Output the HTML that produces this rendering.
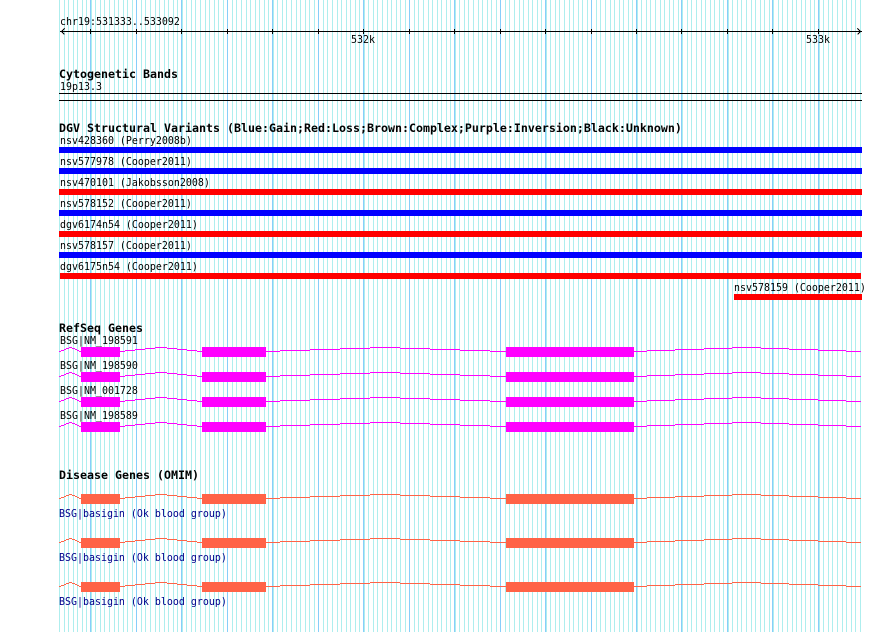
<!DOCTYPE html>
<html><head><meta charset="utf-8"><title>GBrowse BSG</title>
<style>
html,body{margin:0;padding:0;background:#fff;width:890px;height:632px;overflow:hidden}
svg{position:absolute;left:0;top:0}
text{font-family:"DejaVu Sans Mono","Liberation Mono",monospace;font-size:11px;white-space:pre}
.b{font-weight:bold;font-size:11.63px}
</style></head><body>
<svg width="890" height="632" viewBox="0 0 890 632" xmlns="http://www.w3.org/2000/svg">
<defs>
<path id="m" d="M59.5 0V632M64.5 0V632M68.5 0V632M73.5 0V632M77.5 0V632M82.5 0V632M86.5 0V632M91.5 0V632M95.5 0V632M100.5 0V632M104.5 0V632M109.5 0V632M114.5 0V632M118.5 0V632M123.5 0V632M127.5 0V632M132.5 0V632M136.5 0V632M141.5 0V632M145.5 0V632"/>
<g id="gene" shape-rendering="crispEdges">
<path fill="none" stroke="currentColor" stroke-width="1" d="M59 4.5H61M61 3.5H64M64 2.5H66M66 1.5H69M69 .5H72M72 1.5H75M75 2.5H77M77 3.5H79M79 4.5H81M120 4.5H125M125 3.5H135M135 2.5H145M145 1.5H155M155 .5H167M167 1.5H177M177 2.5H187M187 3.5H197M197 4.5H202M266 4.5H280M280 3.5H310M310 2.5H340M340 1.5H370M370 .5H400M400 1.5H430M430 2.5H460M460 3.5H490M490 4.5H506M634 4.5H647M647 3.5H675M675 2.5H704M704 1.5H732M732 .5H761M761 1.5H789M789 2.5H818M818 3.5H846M846 4.5H861"/>
<path fill="currentColor" d="M81 0H120V10H81ZM202 0H266V10H202ZM506 0H634V10H506Z"/>
</g>
</defs>
<g shape-rendering="crispEdges" fill="none" stroke="#aeeeee" stroke-width="1">
<use href="#m" x="0"/><use href="#m" x="91"/><use href="#m" x="182"/><use href="#m" x="273"/><use href="#m" x="364"/><use href="#m" x="455"/><use href="#m" x="546"/><use href="#m" x="637"/>
<path d="M787.5 0V632M792.5 0V632M796.5 0V632M801.5 0V632M805.5 0V632M810.5 0V632M814.5 0V632M819.5 0V632M823.5 0V632M828.5 0V632M832.5 0V632M837.5 0V632M842.5 0V632M846.5 0V632M851.5 0V632M855.5 0V632M860.5 0V632"/>
</g>
<path shape-rendering="crispEdges" fill="none" stroke="#87cefa" stroke-width="1" d="M90.5 0V632M136.5 0V632M181.5 0V632M227.5 0V632M272.5 0V632M318.5 0V632M363.5 0V632M409.5 0V632M454.5 0V632M500.5 0V632M545.5 0V632M591.5 0V632M636.5 0V632M681.5 0V632M727.5 0V632M772.5 0V632M818.5 0V632"/>
<g shape-rendering="crispEdges" fill="none" stroke="#000" stroke-width="1">
<path d="M60 31.5H862M59 93.5H862M59 100.5H862"/>
<path d="M90.5 29V34M136.5 29V34M181.5 29V34M227.5 29V34M272.5 29V34M318.5 29V34M363.5 29V34M409.5 29V34M454.5 29V34M500.5 29V34M545.5 29V34M591.5 29V34M636.5 29V34M681.5 29V34M727.5 29V34M772.5 29V34M818.5 29V34"/>
<path d="M64.5 28.5L61.5 31.5L64.5 34.5M857.5 28.5L860.5 31.5L857.5 34.5"/>
</g>
<g shape-rendering="crispEdges">
<rect x="59" y="147" width="803" height="6" fill="#00f"/>
<rect x="59" y="168" width="803" height="6" fill="#00f"/>
<rect x="59" y="189" width="803" height="6" fill="#f00"/>
<rect x="59" y="210" width="803" height="6" fill="#00f"/>
<rect x="59" y="231" width="803" height="6" fill="#f00"/>
<rect x="59" y="252" width="803" height="6" fill="#00f"/>
<rect x="60" y="273" width="801" height="6" fill="#f00"/>
<rect x="734" y="294" width="128" height="6" fill="#f00"/>
</g>
<use href="#gene" y="347" color="#ff00ff"/>
<use href="#gene" y="372" color="#ff00ff"/>
<use href="#gene" y="397" color="#ff00ff"/>
<use href="#gene" y="422" color="#ff00ff"/>
<use href="#gene" y="494" color="#ff6347"/>
<use href="#gene" y="538" color="#ff6347"/>
<use href="#gene" y="582" color="#ff6347"/>
<g>
<text transform="translate(60,25) scale(.906,1)">chr19:531333..533092</text>
<text transform="translate(351,43) scale(.906,1)">532k</text>
<text transform="translate(806,43) scale(.906,1)">533k</text>
<text class="b" transform="translate(59,78)">Cytogenetic Bands</text>
<text transform="translate(60,90) scale(.906,1)">19p13.3</text>
<text class="b" transform="translate(59,132)">DGV Structural Variants (Blue:Gain;Red:Loss;Brown:Complex;Purple:Inversion;Black:Unknown)</text>
<text transform="translate(60,144) scale(.906,1)">nsv428360 (Perry2008b)</text>
<text transform="translate(60,165) scale(.906,1)">nsv577978 (Cooper2011)</text>
<text transform="translate(60,186) scale(.906,1)">nsv470101 (Jakobsson2008)</text>
<text transform="translate(60,207) scale(.906,1)">nsv578152 (Cooper2011)</text>
<text transform="translate(60,228) scale(.906,1)">dgv6174n54 (Cooper2011)</text>
<text transform="translate(60,249) scale(.906,1)">nsv578157 (Cooper2011)</text>
<text transform="translate(60,270) scale(.906,1)">dgv6175n54 (Cooper2011)</text>
<text transform="translate(734,291) scale(.906,1)">nsv578159 (Cooper2011)</text>
<text class="b" transform="translate(59,332)">RefSeq Genes</text>
<text transform="translate(60,344) scale(.906,1)">BSG|NM_198591</text>
<text transform="translate(60,369) scale(.906,1)">BSG|NM_198590</text>
<text transform="translate(60,394) scale(.906,1)">BSG|NM_001728</text>
<text transform="translate(60,419) scale(.906,1)">BSG|NM_198589</text>
<text class="b" transform="translate(59,479)">Disease Genes (OMIM)</text>
<text fill="#00008b" transform="translate(59,517) scale(.906,1)">BSG|basigin (Ok blood group)</text>
<text fill="#00008b" transform="translate(59,561) scale(.906,1)">BSG|basigin (Ok blood group)</text>
<text fill="#00008b" transform="translate(59,605) scale(.906,1)">BSG|basigin (Ok blood group)</text>
</g>
</svg>
</body></html>
